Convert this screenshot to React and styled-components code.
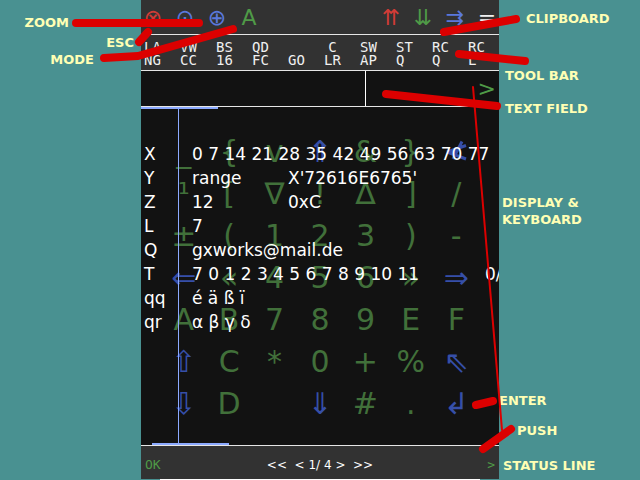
import React from "react";
import styled, { createGlobalStyle } from "styled-components";

const TEAL = "#499191";
const GREEN = "#4f9a47";
const BLUE = "#5a78dc";
const RED = "#d23c37";
const KEY_GREEN = "#41703a";
const KEY_BLUE = "#364fa8";
const ACCENT = "#8caaff";
const RULE = "#e6e6e6";

const GlobalStyle = createGlobalStyle`
  * { box-sizing: border-box; }
  html, body, #root { height: 100%; }
  body {
    margin: 0;
    background: ${TEAL};
    font-family: "DejaVu Sans", sans-serif;
    overflow: hidden;
  }
  button { border: 0; padding: 0; margin: 0; background: none; font: inherit; cursor: pointer; }
`;

const Page = styled.div`
  position: relative;
  display: grid;
  grid-template-columns: 141fr 358fr 141fr;
  min-height: 100vh;
`;

const LeftNotes = styled.aside`
  display: flex;
  flex-direction: column;
  align-items: flex-end;
  padding-top: 14px;
`;

const RightNotes = styled.aside`
  display: flex;
  flex-direction: column;
  align-items: flex-start;
  padding-top: 10px;
`;

const Note = styled.span`
  color: #ffffb4;
  font-weight: bold;
  font-size: 13px;
  line-height: 17px;
  white-space: pre-line;
  margin-top: ${(p) => p.$gap || 0}px;
  padding: 0 ${(p) => p.$end || 0}px 0 ${(p) => p.$start || 0}px;
`;

const Panel = styled.main`
  display: flex;
  flex-direction: column;
  min-width: 0;
  background: #121212;
  color: #fff;
  overflow: hidden;
`;

const Header = styled.header`
  display: flex;
  justify-content: space-between;
  height: 35px;
  background: #323232;
  border-bottom: 1px solid ${RULE};
`;

const IconGroup = styled.div`
  display: flex;
  gap: 8px;
`;

const IconButton = styled.button`
  && {
    width: 24px;
    color: ${(p) => p.$color};
    font-size: 22px;
    line-height: 36px;
    text-align: center;
  }
`;

const Toolbar = styled.nav`
  display: grid;
  grid-template-columns: repeat(9, 36fr) 34fr;
  height: 36px;
  background: #323232;
  border-bottom: 1px solid ${RULE};
`;

const Tool = styled.button`
  && {
    display: flex;
    flex-direction: column;
    align-items: flex-start;
    padding: 6px 0 0 3px;
    color: #f0f0f0;
    font-family: "DejaVu Sans Mono", monospace;
    font-size: 14px;
    line-height: 13px;
  }
`;

const ToolLine = styled.span`
  min-width: 17px;
  height: 13px;
  text-align: ${(p) => (p.$centered ? "center" : "left")};
`;

const EntryRow = styled.div`
  display: grid;
  grid-template-columns: 225fr 133fr;
  height: 36px;
  border-bottom: 1px solid ${RULE};
`;

const Entry = styled.input`
  min-width: 0;
  border: 0;
  border-right: 1px solid #fff;
  background: transparent;
  color: #fff;
  font-size: 17px;
  outline: none;
`;

const EntrySide = styled.div`
  display: flex;
  justify-content: flex-end;
  padding-right: 3px;
`;

const Submit = styled.button`
  && {
    color: ${GREEN};
    font-size: 22px;
    line-height: 35px;
  }
`;

const Screen = styled.section`
  position: relative;
  flex: 1;
  display: flex;
  flex-direction: column;
  justify-content: space-between;
  border-bottom: 1px solid ${RULE};
`;

const ScrollBar = styled.div`
  width: 77px;
  height: 2px;
  background: ${ACCENT};
  margin-left: ${(p) => p.$start || 0}px;
`;

const Guide = styled.div`
  position: absolute;
  top: 0;
  bottom: 0;
  left: 37px;
  width: 1px;
  background: ${ACCENT};
`;

const Keyboard = styled.div`
  display: grid;
  grid-template-columns: repeat(7, 1fr);
  grid-auto-rows: 42px;
  padding: 0 20px;
  margin-bottom: 18px;
`;

const Key = styled.button`
  && {
    color: ${(p) => (p.$blue ? KEY_BLUE : KEY_GREEN)};
    font-size: 30px;
    line-height: 42px;
    text-align: center;
  }
`;

const KeyIcon = styled.svg`
  display: block;
  width: 24px;
  height: 24px;
  margin: 0 auto;
  fill: none;
  stroke: currentColor;
  stroke-width: 3;
`;

const Readout = styled.dl`
  position: absolute;
  top: 35px;
  left: 0;
  right: 0;
  margin: 0;
  overflow: hidden;
  pointer-events: none;
`;

const Register = styled.div`
  display: grid;
  grid-template-columns: 48px 96px 1fr 14px;
  padding-left: 3px;
  font-size: 17px;
  line-height: 24px;
  white-space: nowrap;
`;

const Name = styled.dt``;

const Value = styled.dd`
  margin: 0;
  min-width: 0;
`;

const Status = styled.footer`
  display: flex;
  justify-content: space-between;
  align-items: center;
  height: 33px;
  padding: 4px 4px 0;
  background: #323232;
  font-size: 12px;
`;

const BaseLine = styled.div`
  height: 1px;
  padding: 0 19px;
  background: #fff content-box;
  border: solid ${TEAL};
  border-width: 0 19px;
  padding: 0;
`;

const StatusTag = styled.button`
  && {
    min-width: 16px;
    color: ${GREEN};
    font-family: "DejaVu Sans Mono", monospace;
    font-size: 13px;
    text-align: ${(p) => (p.$end ? "right" : "left")};
  }
`;

const Pager = styled.span`
  white-space: pre;
`;

const Pointers = styled.svg`
  position: absolute;
  inset: 0;
  width: 100%;
  height: 100%;
  pointer-events: none;
  fill: none;
  stroke: #dc0000;
  stroke-linecap: round;
  stroke-linejoin: round;
`;

const TOOLS = [
  ["LA", "NG"], ["VW", "CC"], ["BS", "16"], ["QD", "FC"], ["", "GO"],
  ["C", "LR", true], ["SW", "AP"], ["ST", "Q"], ["RC", "Q"], ["RC", "L"],
];

const KEYS = [
  "_", "{", "v", "⇑", "&", "}", "cut",
  "¹", "[", "∇", "!", "∆", "]", "/",
  "±", "(", "1", "2", "3", ")", "-",
  "⇐", "«", "4", "5", "6", "»", "⇒",
  "A", "B", "7", "8", "9", "E", "F",
  "⇧", "C", "*", "0", "+", "%", "⇖",
  "⇩", "D", "", "⇓", "#", ".", "↲",
];

const BLUE_KEYS = ["cut", "⇑", "⇐", "⇒", "⇧", "⇖", "⇩", "⇓", "↲"];

const REGISTERS = [
  ["X", "0 7 14 21 28 35 42 49 56 63 70 77"],
  ["Y", "range", "X'72616E6765'"],
  ["Z", "12", "0xC"],
  ["L", "7"],
  ["Q", "gxworks@mail.de"],
  ["T", "7 0 1 2 3 4 5 6 7 8 9 10 11", "", "0/"],
  ["qq", "é ä ß ï"],
  ["qr", "α β γ δ"],
];

function CutIcon() {
  return (
    <KeyIcon viewBox="0 0 24 24">
      <path d="M3 12L22 5.500M3 12L22 19M18 1.500L9 19" />
      <path d="M4 12L14 8.500L11 14Z" fill="currentColor" stroke="none" />
    </KeyIcon>
  );
}

export default function App() {
  return (
    <Page>
      <GlobalStyle />
      <LeftNotes>
        <Note $end={72}>ZOOM</Note>
        <Note $gap={3} $end={7}>ESC</Note>
        <Note $end={47}>MODE</Note>
      </LeftNotes>
      <Panel>
        <Header>
          <IconGroup>
            <IconButton $color={RED} aria-label="Escape">⊗</IconButton>
            <IconButton $color={BLUE} aria-label="Reset zoom">⊙</IconButton>
            <IconButton $color={BLUE} aria-label="Zoom in">⊕</IconButton>
            <IconButton $color={GREEN} aria-label="Mode">A</IconButton>
          </IconGroup>
          <IconGroup>
            <IconButton $color={RED} aria-label="Copy">⇈</IconButton>
            <IconButton $color={GREEN} aria-label="Paste">⇊</IconButton>
            <IconButton $color={BLUE} aria-label="Send">⇉</IconButton>
            <IconButton $color="#f0f0f0" aria-label="Menu">=</IconButton>
          </IconGroup>
        </Header>
        <Toolbar>
          {TOOLS.map(([a, b, centered], i) => (
            <Tool key={i}>
              <ToolLine $centered={centered}>{a}</ToolLine>
              <ToolLine>{b}</ToolLine>
            </Tool>
          ))}
        </Toolbar>
        <EntryRow>
          <Entry aria-label="Text field" />
          <EntrySide>
            <Submit aria-label="Submit">&gt;</Submit>
          </EntrySide>
        </EntryRow>
        <Screen>
          <ScrollBar />
          <Guide />
          <div>
            <Keyboard>
              {KEYS.map((k, i) =>
                k ? (
                  <Key key={i} $blue={BLUE_KEYS.includes(k)} aria-label={k}>
                    {k === "cut" ? <CutIcon /> : k}
                  </Key>
                ) : (
                  <span key={i} />
                )
              )}
            </Keyboard>
            <ScrollBar $start={11} />
          </div>
          <Readout>
            {REGISTERS.map(([name, value, alt, tail]) => (
              <Register key={name}>
                <Name>{name}</Name>
                <Value>{value}</Value>
                <Value>{alt}</Value>
                <Value>{tail}</Value>
              </Register>
            ))}
          </Readout>
        </Screen>
        <Status>
          <StatusTag>OK</StatusTag>
          <Pager>{"<<  < 1/ 4 >  >>"}</Pager>
          <StatusTag $end aria-label="Push">&gt;</StatusTag>
        </Status>
        <BaseLine />
      </Panel>
      <RightNotes>
        <Note $start={27}>CLIPBOARD</Note>
        <Note $gap={40} $start={6}>TOOL BAR</Note>
        <Note $gap={16} $start={6}>TEXT FIELD</Note>
        <Note $gap={77} $start={3}>{"DISPLAY &\nKEYBOARD"}</Note>
        <Note $gap={164}>ENTER</Note>
        <Note $gap={13} $start={18}>PUSH</Note>
        <Note $gap={18} $start={4}>STATUS LINE</Note>
      </RightNotes>
      <Pointers viewBox="0 0 640 480" preserveAspectRatio="none" aria-hidden="true">
        <g strokeWidth="8">
          <path d="M76 23H199" />
          <path d="M104 58L138 56L233 29" />
          <path d="M139 42L148 32" />
          <path d="M444 32L516 19" />
          <path d="M459 54L525 61" />
          <path d="M386 94L497 106" />
          <path d="M476 405L493 401" />
          <path d="M483 449L511 429" />
        </g>
        <path strokeWidth="2" d="M473 87L502 430" />
      </Pointers>
    </Page>
  );
}
